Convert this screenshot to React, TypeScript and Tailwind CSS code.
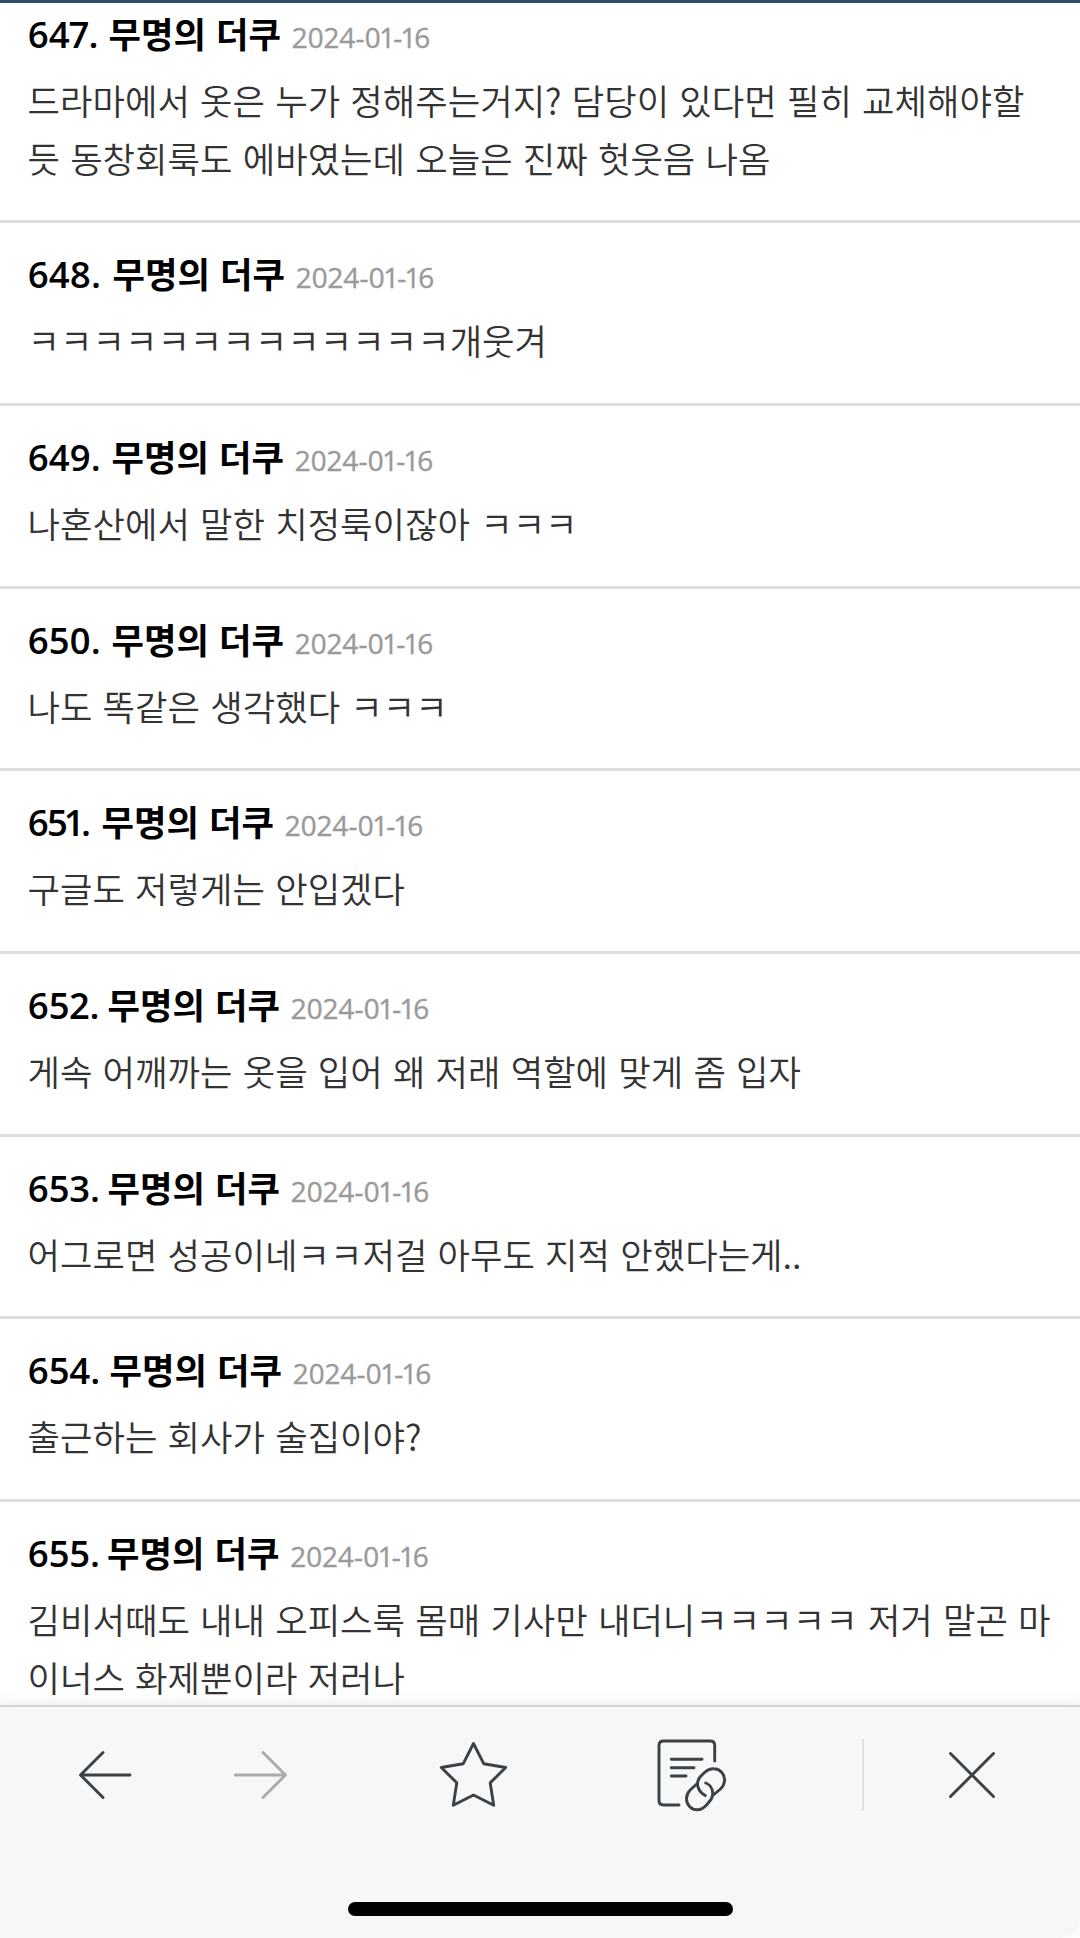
import type { FC, ReactNode } from 'react';
import clsx from 'clsx';

type Comment = {
  id: number;
  numberWidth: number;
  tight?: boolean;
  lines: string[];
};

const AUTHOR = '무명의 더쿠';
const DATE = '2024-01-16';

const comments: Comment[] = [
  {
    id: 647,
    numberWidth: 81,
    lines: [
      '드라마에서 옷은 누가 정해주는거지? 담당이 있다먼 필히 교체해야할',
      '듯 동창회룩도 에바였는데 오늘은 진짜 헛웃음 나옴',
    ],
  },
  { id: 648, numberWidth: 85, lines: ['ㅋㅋㅋㅋㅋㅋㅋㅋㅋㅋㅋㅋㅋ개웃겨'] },
  { id: 649, numberWidth: 84, lines: ['나혼산에서 말한 치정룩이잖아 ㅋㅋㅋ'] },
  { id: 650, numberWidth: 84, lines: ['나도 똑같은 생각했다 ㅋㅋㅋ'] },
  { id: 651, numberWidth: 74, tight: true, lines: ['구글도 저렇게는 안입겠다'] },
  {
    id: 652,
    numberWidth: 80,
    lines: ['게속 어깨까는 옷을 입어 왜 저래 역할에 맞게 좀 입자'],
  },
  {
    id: 653,
    numberWidth: 80,
    lines: ['어그로면 성공이네ㅋㅋ저걸 아무도 지적 안했다는게..'],
  },
  { id: 654, numberWidth: 82, lines: ['출근하는 회사가 술집이야?'] },
  {
    id: 655,
    numberWidth: 79.5,
    lines: [
      '김비서때도 내내 오피스룩 몸매 기사만 내더니ㅋㅋㅋㅋㅋ 저거 말곤 마',
      '이너스 화제뿐이라 저러나',
    ],
  },
];

const CommentItem: FC<{ comment: Comment }> = ({ comment }) => {
  return (
    <li className="border-b-[3px] border-[#dedede] pl-[27.5px] pt-[21px] pb-[33.67px] whitespace-nowrap">
      <div className="flex h-[58px] items-baseline leading-[58px]">
        <span
          className={clsx(
            "shrink-0 font-['Open_Sans','Noto_Sans_CJK_KR',sans-serif] text-[36.5px] font-semibold proportional-nums text-black",
            comment.tight ? 'tracking-[-2px]' : 'tracking-[-0.2px]'
          )}
          style={{ width: comment.numberWidth }}
        >
          {comment.id}.
        </span>
        <span className="w-[183.5px] shrink-0 font-['Noto_Sans_CJK_KR',sans-serif] text-[35.3px] font-bold [word-spacing:2px] text-black">
          {AUTHOR}
        </span>
        <span className="font-['Open_Sans','Noto_Sans_CJK_KR',sans-serif] text-[28px] tracking-[0.05px] proportional-nums text-[#9a9a9a] [-webkit-text-stroke:0.4px_#9a9a9a]">
          {DATE}
        </span>
      </div>
      <div className="mt-[9px] font-['Noto_Sans_CJK_KR',sans-serif] text-[35.3px] font-[350] leading-[58px] [word-spacing:2.3px] text-[#333333]">
        {comment.lines.map((line) => (
          <p key={line}>{line}</p>
        ))}
      </div>
    </li>
  );
};

const ToolbarIcon: FC<{ className: string; viewBox: string; children: ReactNode }> = ({
  className,
  viewBox,
  children,
}) => (
  <svg
    className={className}
    viewBox={viewBox}
    fill="none"
    stroke="currentColor"
    strokeWidth="2.9"
    strokeLinecap="round"
    strokeLinejoin="round"
  >
    {children}
  </svg>
);

const Toolbar = () => {
  return (
    <nav className="relative h-[233px] shrink-0 rounded-br-[22px] border-t-2 border-[#d2d4d6] bg-[#f5f7f9] text-[#3c4145] shadow-[0_-3px_14px_rgba(0,0,0,0.07)]">
      <div className="flex h-[136px] items-center">
        <ToolbarIcon className="ml-[75px] h-[60px] w-[60px]" viewBox="0 0 60 60">
          <path d="M55 30H5.5M28 7.5L5.5 30L28 52.5" />
        </ToolbarIcon>
        <ToolbarIcon
          className="ml-[96px] h-[60px] w-[60px] text-[#a8acae]"
          viewBox="0 0 60 60"
        >
          <path d="M4.5 30H54.5M32 7.5L54.5 30L32 52.5" />
        </ToolbarIcon>
        <ToolbarIcon className="ml-[143px] h-[80px] w-[80px]" viewBox="434 1735 80 80">
          <path d="M473.5 1743.5L483.7 1763.7L505.7 1767.5L490.2 1782.8L493.7 1805.3L473.5 1795L453.3 1805.3L456.8 1782.8L441.3 1767.5L463.3 1763.7Z" />
        </ToolbarIcon>
        <ToolbarIcon className="ml-[136px] h-[80px] w-[80px]" viewBox="650 1735 80 80">
          <path d="M714.7 1761V1745.5Q714.7 1741 710.2 1741H663.5Q659 1741 659 1745.5V1800.5Q659 1805 663.5 1805H679" />
          <path d="M671.3 1759.3H702M671.3 1767.7H694M671.3 1776H686" />
          <path d="M705.3 1795.5C698.5 1792 694.5 1783.5 700.5 1776.5L704.5 1772.5C708 1769.5 711 1768.6 713.8 1768.8C720.5 1769 725 1774.5 724.6 1780.5C724.3 1784 723 1786.5 720.5 1789L713.3 1795" />
          <path d="M705.7 1783C711.5 1785 715 1792.5 711 1799.5L706.5 1805C703.5 1808.2 700.5 1809.8 697.5 1809.8C691 1809.8 686.3 1804.5 686.5 1798.5C686.6 1795 687.7 1792.5 690.2 1790L697 1783.8" />
        </ToolbarIcon>
        <span className="ml-[132px] h-[72px] w-[2px] bg-[#dde1e4]" />
        <ToolbarIcon className="ml-[78px] h-[60px] w-[60px]" viewBox="0 0 60 60">
          <path d="M8.5 8.5L51.5 51.5M51.5 8.5L8.5 51.5" />
        </ToolbarIcon>
      </div>
      <div className="mx-auto mt-[59px] h-[14px] w-[385px] rounded-full bg-black" />
    </nav>
  );
};

const App = () => {
  return (
    <div className="flex h-[1938px] w-[1080px] flex-col overflow-hidden bg-white">
      <div className="relative z-10 h-[3px] shrink-0 bg-[#314f68]" />
      <main className="min-h-0 flex-1 overflow-hidden">
        <ul className="-mt-[20.2px]">
          {comments.map((comment) => (
            <CommentItem key={comment.id} comment={comment} />
          ))}
        </ul>
      </main>
      <Toolbar />
    </div>
  );
};

export default App;
